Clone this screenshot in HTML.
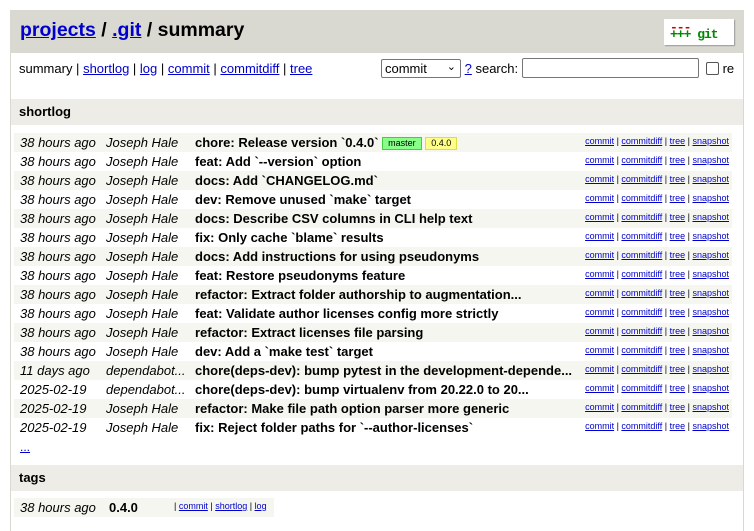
<!DOCTYPE html>
<html><head><style>
body{margin:0;background:#fff;font-family:"Liberation Sans",Arial,sans-serif;font-size:13px;color:#000;width:754px;height:518px;overflow:hidden;position:relative}
a{color:#0000cc}
.frame{position:absolute;left:10px;top:10px;width:732px;height:520px;border:1px solid #d9d8d1;border-bottom:none}
.hdr{position:absolute;left:0;top:0;width:732px;height:42px;background:#d9d8d1}
.title{position:absolute;left:9px;top:8px;font-size:19.5px;font-weight:bold}
.logo{position:absolute;left:653px;top:8px;width:70px;height:26px;background:#fff;box-shadow:1px 1px 1px #999;font-family:"Liberation Mono",monospace;font-weight:bold;font-size:13px}
.nav{position:absolute;left:8px;top:50px}
.search{position:absolute;left:370px;top:47px;display:flex;align-items:center}
.sel{width:80px;height:19px;border:1px solid #767676;border-radius:2px;font-size:13px;padding:0 0 0 3px;box-sizing:border-box;line-height:17px;position:relative}
.inp{width:177px;height:20px;border:1px solid #767676;border-radius:2px;box-sizing:border-box}
.sec{position:absolute;left:0;width:732px;height:26px;background:#edece6;font-weight:bold;line-height:26px}
.sec span{padding-left:8px}
.row{position:absolute;left:4px;width:718px;height:19px;line-height:19px;white-space:nowrap}
.row.l{background:#f6f6f0}
.row i{position:absolute;left:6px}
.row .au{position:absolute;left:92px;font-style:italic}
.row b{position:absolute;left:181px}
.lk{position:absolute;right:3px;font-size:9px;top:-1px}
.tag{display:inline-block;font-size:9px;font-weight:normal;line-height:11px;padding:0 5px;border:1px solid;vertical-align:1px}
</style></head><body>
<div class="frame">
<div class="hdr"><div class="title"><a href="#">projects</a> / <a href="#">.git</a> / summary</div>
<div class="logo"><div style="position:absolute;left:6px;top:1px;color:#c00;letter-spacing:-1px">---</div><div style="position:absolute;left:6px;top:8px;color:#080;letter-spacing:-1px">+++ git</div></div></div>
<div class="nav">summary | <a href="#">shortlog</a> | <a href="#">log</a> | <a href="#">commit</a> | <a href="#">commitdiff</a> | <a href="#">tree</a></div>
<div class="search"><div class="sel">commit<span style="position:absolute;right:4px;top:-1px;font-size:11px">&#8964;</span></div>&nbsp;<a href="#">?</a>&nbsp;search:&nbsp;<div class="inp"></div>&nbsp;&nbsp;<span style="display:inline-block;width:11px;height:11px;border:1px solid #555;border-radius:2px"></span>&nbsp;re</div>
<div class="sec" style="top:88px"><span>shortlog</span></div>
<div class="sec" style="top:454px"><span>tags</span></div>
</div>
<div id="rows"></div>
<div style="position:absolute;left:20px;top:440px;font-size:12px"><a href="#">...</a></div>
<div class="row l" style="top:498px;left:14px;width:260px"><i>38 hours ago</i><b style="left:95px">0.4.0</b><span style="position:absolute;left:160px;font-size:9px;top:-1px">| <a href="#">commit</a> | <a href="#">shortlog</a> | <a href="#">log</a></span></div>
<script>
var d=[["38 hours ago","Joseph Hale","chore: Release version `0.4.0`",1],["38 hours ago","Joseph Hale","feat: Add `--version` option"],["38 hours ago","Joseph Hale","docs: Add `CHANGELOG.md`"],["38 hours ago","Joseph Hale","dev: Remove unused `make` target"],["38 hours ago","Joseph Hale","docs: Describe CSV columns in CLI help text"],["38 hours ago","Joseph Hale","fix: Only cache `blame` results"],["38 hours ago","Joseph Hale","docs: Add instructions for using pseudonyms"],["38 hours ago","Joseph Hale","feat: Restore pseudonyms feature"],["38 hours ago","Joseph Hale","refactor: Extract folder authorship to augmentation..."],["38 hours ago","Joseph Hale","feat: Validate author licenses config more strictly"],["38 hours ago","Joseph Hale","refactor: Extract licenses file parsing"],["38 hours ago","Joseph Hale","dev: Add a `make test` target"],["11 days ago","dependabot...","chore(deps-dev): bump pytest in the development-depende..."],["2025-02-19","dependabot...","chore(deps-dev): bump virtualenv from 20.22.0 to 20..."],["2025-02-19","Joseph Hale","refactor: Make file path option parser more generic"],["2025-02-19","Joseph Hale","fix: Reject folder paths for `--author-licenses`"]];
var h="";d.forEach(function(r,i){h+='<div class="row'+(i%2==0?' l':'')+'" style="left:14px;top:'+(133+i*19)+'px"><i>'+r[0]+'</i><span class="au">'+r[1]+'</span><b>'+r[2]+(r[3]?' <span class="tag" style="background:#8f8;border-color:#4c4">master</span> <span class="tag" style="background:#ff8;border-color:#dd4">0.4.0</span>':'')+'</b><span class="lk"><a href="#">commit</a> | <a href="#">commitdiff</a> | <a href="#">tree</a> | <a href="#">snapshot</a></span></div>'});
document.getElementById("rows").innerHTML=h;
</script>
</body></html>
